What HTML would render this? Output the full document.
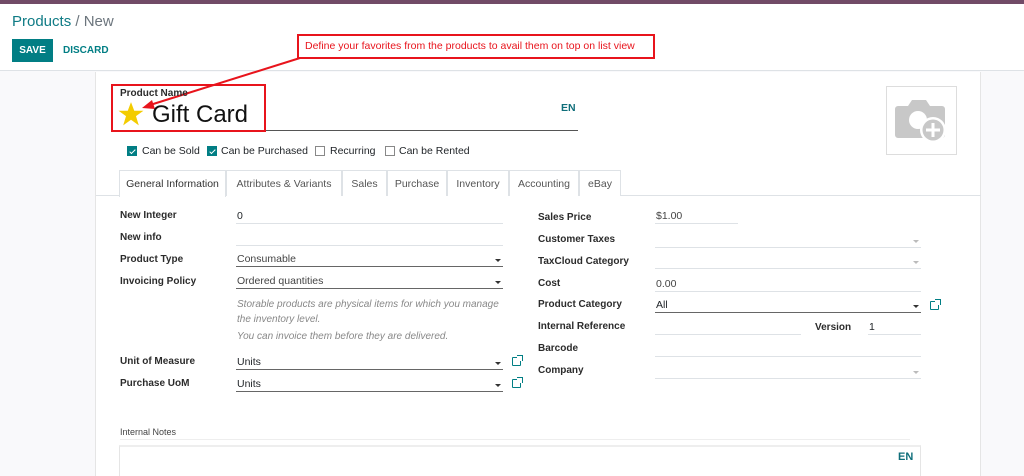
<!DOCTYPE html>
<html><head><meta charset="utf-8"><style>
*{margin:0;padding:0;box-sizing:border-box}
html,body{width:1024px;height:476px;overflow:hidden}
body{background:#f9f9fb;font-family:"Liberation Sans",sans-serif;color:#212529;position:relative;font-size:10.5px}
.a{position:absolute;white-space:nowrap}
.lbl{font-weight:bold;font-size:10px;color:#2b2b2b}
.fld{position:absolute;border-bottom:1px solid #dee2e6;height:14px}
.fld.d{border-bottom:1px solid #666}
.v{font-size:10.5px;color:#212529;position:absolute;left:1px;top:0px}
.car{position:absolute;right:2px;top:6px;width:0;height:0;border-left:3px solid transparent;border-right:3px solid transparent;border-top:3px solid #333}
.car.l{border-top-color:#bbb}
.cb{position:absolute;width:10px;height:10px;border:1px solid #888;background:#fff}
.cb.on{background:#017e84;border-color:#017e84}
.cb.on:after{content:"";position:absolute;left:3px;top:1px;width:2px;height:5px;border:solid #fff;border-width:0 1px 1px 0;transform:rotate(45deg)}
.tab{position:absolute;top:170px;height:26px;border:1px solid #dee2e6;border-bottom:none;font-size:10.5px;color:#555;padding-top:7px;text-align:center;background:#fff}
.ext{position:absolute;width:9px;height:9px;border:1px solid #017e84;border-radius:1px}
.ext:after{content:"";position:absolute;right:-3px;top:-3px;width:5px;height:5px;border-top:1.5px solid #017e84;border-right:1.5px solid #017e84;background:#fff}
</style></head><body>
<div class="a" style="left:0;top:0;width:1024px;height:4px;background:#714b67"></div>
<div class="a" style="left:0;top:4px;width:1024px;height:67px;background:#fff;border-bottom:1px solid #dee2e6"></div>
<div class="a" style="left:12px;top:13px;font-size:15px;color:#0f7b85">Products <span style="color:#6c757d">/ New</span></div>
<div class="a" style="left:12px;top:39px;width:41px;height:23px;background:#017e84;color:#fff;font-weight:bold;font-size:10px;text-align:center;line-height:23px">SAVE</div>
<div class="a" style="left:63px;top:45px;color:#017e84;font-weight:bold;font-size:10px">DISCARD</div>

<div class="a" style="left:95px;top:72px;width:886px;height:404px;background:#fff;border-left:1px solid #e5e5e5;border-right:1px solid #e5e5e5"></div>

<div class="a" style="left:297px;top:34px;width:358px;height:25px;border:2px solid #e8141c;background:#fff;color:#e8141c;font-size:10.5px;line-height:21px;padding-left:6px">Define your favorites from the products to avail them on top on list view</div>
<svg class="a" style="left:0;top:0" width="1024" height="476"><line x1="300" y1="58" x2="150" y2="105" stroke="#e8141c" stroke-width="2"/><polygon points="142,108 152,100 155,109" fill="#e8141c"/></svg>

<div class="a lbl" style="left:120px;top:88px">Product Name</div>
<div class="a" style="left:152px;top:130px;width:426px;height:1px;background:#555"></div>
<svg class="a" style="left:118px;top:101px" width="26" height="26" viewBox="0 0 24 24"><polygon points="12,1 15,9 23.5,9 16.6,14 19.2,22.5 12,17.3 4.8,22.5 7.4,14 0.5,9 9,9" fill="#f3cc00"/></svg>
<div class="a" style="left:152px;top:101px;font-size:24px;color:#111">Gift Card</div>
<div class="a" style="left:111px;top:84px;width:155px;height:48px;border:2px solid #e8141c"></div>
<div class="a" style="left:561px;top:102px;color:#0f6e7a;font-weight:bold;font-size:10.5px">EN</div>
<div class="a" style="left:886px;top:86px;width:71px;height:69px;border:1px solid #ddd"></div>
<svg class="a" style="left:894px;top:98px" width="56" height="50" viewBox="0 0 56 50"><path d="M4 8h10l4-6h14l4 6h12a3 3 0 0 1 3 3v26a3 3 0 0 1-3 3H4a3 3 0 0 1-3-3V11a3 3 0 0 1 3-3z" fill="#c8c8c8"/><circle cx="24" cy="22" r="9" fill="#fff"/><circle cx="39" cy="32" r="13" fill="#fff"/><circle cx="39" cy="32" r="10.5" fill="#c8c8c8"/><rect x="37.5" y="25" width="3" height="14" fill="#fff"/><rect x="32" y="30.5" width="14" height="3" fill="#fff"/></svg>

<div class="cb on" style="left:127px;top:146px"></div><div class="a" style="left:142px;top:145px">Can be Sold</div>
<div class="cb on" style="left:207px;top:146px"></div><div class="a" style="left:221px;top:145px">Can be Purchased</div>
<div class="cb" style="left:315px;top:146px"></div><div class="a" style="left:330px;top:145px">Recurring</div>
<div class="cb" style="left:385px;top:146px"></div><div class="a" style="left:399px;top:145px">Can be Rented</div>

<div class="a" style="left:96px;top:195px;width:885px;height:1px;background:#dee2e6"></div>
<div class="tab" style="left:119px;width:107px;color:#333;height:27px">General Information</div>
<div class="tab" style="left:226px;width:116px">Attributes &amp; Variants</div>
<div class="tab" style="left:342px;width:45px">Sales</div>
<div class="tab" style="left:387px;width:60px">Purchase</div>
<div class="tab" style="left:447px;width:62px">Inventory</div>
<div class="tab" style="left:509px;width:70px">Accounting</div>
<div class="tab" style="left:579px;width:42px">eBay</div>

<div class="a lbl" style="left:120px;top:210px">New Integer</div>
<div class="fld" style="left:236px;top:210px;width:267px"><span class="v">0</span></div>
<div class="a lbl" style="left:120px;top:232px">New info</div>
<div class="fld" style="left:236px;top:232px;width:267px"></div>
<div class="a lbl" style="left:120px;top:254px">Product Type</div>
<div class="fld d" style="left:236px;top:253px;width:267px"><span class="v" style="color:#444">Consumable</span><i class="car"></i></div>
<div class="a lbl" style="left:120px;top:276px">Invoicing Policy</div>
<div class="fld d" style="left:236px;top:275px;width:267px"><span class="v" style="color:#444">Ordered quantities</span><i class="car"></i></div>
<div class="a" style="left:237px;top:297px;color:#888;font-style:italic;line-height:15px;font-size:10px">Storable products are physical items for which you manage<br>the inventory level.</div>
<div class="a" style="left:237px;top:331px;color:#888;font-style:italic;font-size:10px">You can invoice them before they are delivered.</div>
<div class="a lbl" style="left:120px;top:356px">Unit of Measure</div>
<div class="fld d" style="left:236px;top:356px;width:267px"><span class="v">Units</span><i class="car"></i></div>
<div class="ext" style="left:512px;top:357px"></div>
<div class="a lbl" style="left:120px;top:378px">Purchase UoM</div>
<div class="fld d" style="left:236px;top:378px;width:267px"><span class="v">Units</span><i class="car"></i></div>
<div class="ext" style="left:512px;top:379px"></div>

<div class="a lbl" style="left:538px;top:212px">Sales Price</div>
<div class="fld" style="left:655px;top:210px;width:83px"><span class="v" style="color:#444">$1.00</span></div>
<div class="a lbl" style="left:538px;top:234px">Customer Taxes</div>
<div class="fld" style="left:655px;top:234px;width:266px"><i class="car l"></i></div>
<div class="a lbl" style="left:538px;top:256px">TaxCloud Category</div>
<div class="fld" style="left:655px;top:255px;width:266px"><i class="car l"></i></div>
<div class="a lbl" style="left:538px;top:278px">Cost</div>
<div class="fld" style="left:655px;top:278px;width:266px"><span class="v" style="color:#444">0.00</span></div>
<div class="a lbl" style="left:538px;top:299px">Product Category</div>
<div class="fld d" style="left:655px;top:299px;width:266px"><span class="v">All</span><i class="car"></i></div>
<div class="ext" style="left:930px;top:301px"></div>
<div class="a lbl" style="left:538px;top:321px">Internal Reference</div>
<div class="fld" style="left:655px;top:321px;width:146px"></div>
<div class="a lbl" style="left:815px;top:322px">Version</div>
<div class="fld" style="left:868px;top:321px;width:53px"><span class="v">1</span></div>
<div class="a lbl" style="left:538px;top:343px">Barcode</div>
<div class="fld" style="left:655px;top:343px;width:266px"></div>
<div class="a lbl" style="left:538px;top:365px">Company</div>
<div class="fld" style="left:655px;top:365px;width:266px"><i class="car l"></i></div>

<div class="a" style="left:120px;top:427px;font-size:9px;color:#444">Internal Notes</div>
<div class="a" style="left:120px;top:439px;width:790px;height:1px;background:#eee"></div>
<div class="a" style="left:119px;top:445px;width:802px;height:40px;border:1px solid #e5e5e5;border-top:2px solid #eee"></div>
<div class="a" style="left:898px;top:451px;color:#0f6e7a;font-weight:bold;font-size:11px">EN</div>
</body></html>
